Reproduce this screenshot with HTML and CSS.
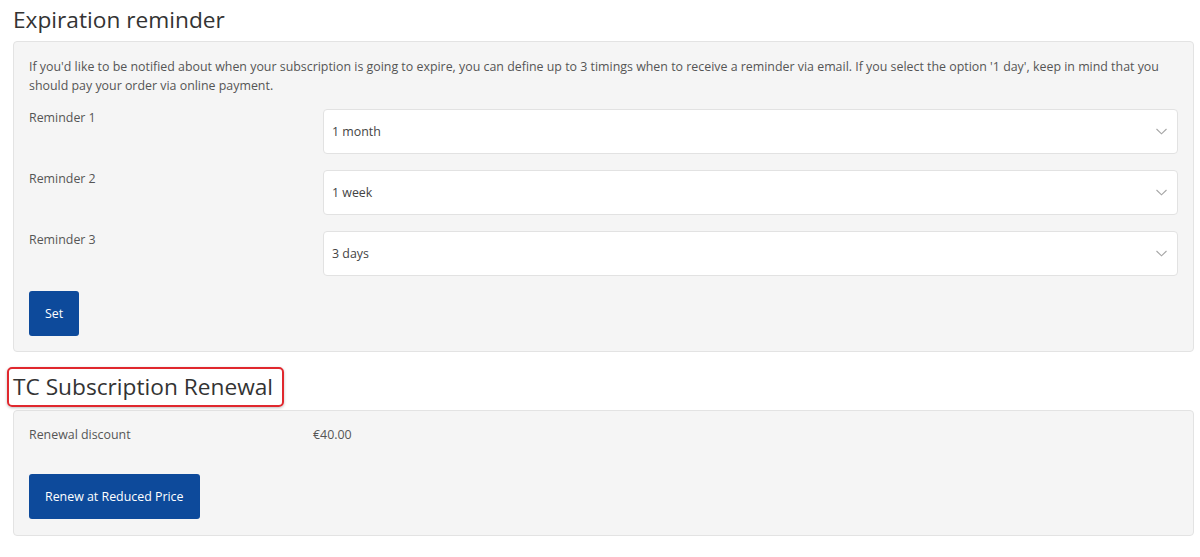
FILE: index.html
```html
<!DOCTYPE html>
<html lang="en">
<head>
  <meta charset="UTF-8">
  <meta name="viewport" content="width=device-width, initial-scale=1.0">
  <link rel="stylesheet" href="styles.css">
  <title>Subscription</title>
</head>
<body>
  <div class="page">
    <h2 class="section-title">Expiration reminder</h2>
    <div class="panel">
      <p class="intro">If you'd like to be notified about when your subscription is going to expire, you can define up to 3 timings when to receive a reminder via email. If you select the option '1 day', keep in mind that you should pay your order via online payment.</p>
      <div class="form-row">
        <label class="form-label">Reminder 1</label>
        <div class="select-box">
          <span>1 month</span>
          <svg class="chevron" width="11" height="7" viewBox="0 0 11 7"><path d="M0.5 1l5 4.8 5-4.8" fill="none" stroke="#a6a6a6" stroke-width="1.1"/></svg>
        </div>
      </div>
      <div class="form-row">
        <label class="form-label">Reminder 2</label>
        <div class="select-box">
          <span>1 week</span>
          <svg class="chevron" width="11" height="7" viewBox="0 0 11 7"><path d="M0.5 1l5 4.8 5-4.8" fill="none" stroke="#a6a6a6" stroke-width="1.1"/></svg>
        </div>
      </div>
      <div class="form-row">
        <label class="form-label">Reminder 3</label>
        <div class="select-box">
          <span>3 days</span>
          <svg class="chevron" width="11" height="7" viewBox="0 0 11 7"><path d="M0.5 1l5 4.8 5-4.8" fill="none" stroke="#a6a6a6" stroke-width="1.1"/></svg>
        </div>
      </div>
      <a href="#" class="btn btn-set">Set</a>
    </div>

    <h2 class="section-title highlighted">TC Subscription Renewal</h2>
    <div class="panel panel-renewal">
      <div class="info-row">
        <span class="info-label">Renewal discount</span>
        <span class="info-value">&euro;40.00</span>
      </div>
      <a href="#" class="btn btn-renew">Renew at Reduced Price</a>
    </div>
  </div>
</body>
</html>
```

FILE: styles.css
```css
* {
  box-sizing: border-box;
}
body {
  margin: 0;
  padding: 0;
  background: #fff;
  color: #333;
  font-size: 12.4px;
  font-family: "Open Sans", "Liberation Sans", Arial, sans-serif;
}
.page {
  padding: 0 6px 0 13px;
}
.section-title {
  margin: 0;
  padding: 5px 0 6px;
  font-size: 22.7px;
  font-weight: 400;
  line-height: 30px;
  color: #333;
}
.section-title.highlighted {
  display: inline-block;
  margin: 15px 0 3px -6px;
  padding: 3px 9px 3px 4px;
  border: 2px solid #e0282e;
  border-radius: 5px;
  box-shadow: 0 1px 3px rgba(0, 0, 0, 0.25);
}
.panel {
  background: #f5f5f5;
  border: 1px solid #e3e3e3;
  border-radius: 4px;
  padding: 15px 15px 15px;
}
.intro {
  margin: 0 0 14px;
  line-height: 19px;
  color: #555;
}
.form-row {
  display: flex;
  align-items: flex-start;
  margin-bottom: 16px;
}
.form-row:last-of-type {
  margin-bottom: 15px;
}
.form-label {
  width: 294px;
  flex-shrink: 0;
  color: #555;
  line-height: 18px;
}
.select-box {
  flex: 1;
  height: 45px;
  display: flex;
  align-items: center;
  justify-content: space-between;
  padding: 0 10px 0 8px;
  background: #fff;
  border: 1px solid #e2e2e2;
  border-radius: 4px;
  color: #444;
}
.btn {
  display: inline-block;
  height: 45px;
  line-height: 45px;
  background: #0d4a9b;
  color: #fff;
  text-decoration: none;
  border-radius: 3px;
}
.btn-set {
  padding: 0 16px;
}
.panel-renewal {
  padding: 14px 15px 16px;
}
.info-row {
  display: flex;
  color: #555;
  line-height: 20px;
  margin-bottom: 29px;
}
.info-label {
  width: 284px;
}
.btn-renew {
  padding: 0 16px;
}
```
